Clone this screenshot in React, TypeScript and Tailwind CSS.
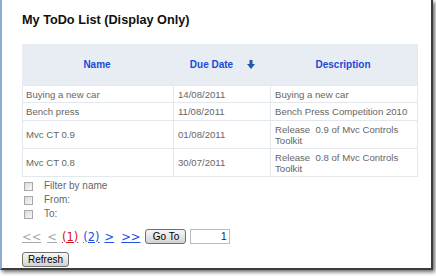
import React from "react";

const rows = [
  { name: "Buying a new car", date: "14/08/2011", desc: ["Buying a new car"], h: "h-[17px]" },
  { name: "Bench press", date: "11/08/2011", desc: ["Bench Press Competition 2010"], h: "h-[18px]" },
  { name: "Mvc CT 0.9", date: "01/08/2011", desc: ["Release\u00a0 0.9 of Mvc Controls", "Toolkit"], h: "h-[28px]" },
  { name: "Mvc CT 0.8", date: "30/07/2011", desc: ["Release\u00a0 0.8 of Mvc Controls", "Toolkit"], h: "h-[28px]" },
];

function Box({ label }: { label: string }) {
  return (
    <div className="flex h-[14px] items-center">
      <span className="ml-[2px] box-border h-[9px] w-[9px] border border-[#a8a8a8] bg-gradient-to-br from-[#dcdcdc] to-[#f8f8f8]" />
      <span className="ml-[11px] text-[10px] leading-[12px] text-[#666]">{label}</span>
    </div>
  );
}

function Btn({ children, w }: { children: React.ReactNode; w: string }) {
  return (
    <div
      className={`box-border flex h-[15px] ${w} items-center justify-center rounded-[3px] border border-[#707070] bg-gradient-to-b from-[#f6f6f6] via-[#e6e6e6] to-[#d2d2d2] text-[10px] leading-[12px] text-black`}
    >
      {children}
    </div>
  );
}

export default function App() {
  return (
    <div className="relative h-[276px] w-[436px] overflow-hidden bg-white font-['Liberation_Sans',Arial,sans-serif]">
      <div className="box-border h-[270px] w-[433px] border-b-2 border-l-2 border-r-2 border-b-[#3c3c3c] border-l-[#8eabd0] border-r-[#3c3c3c] bg-white pl-[20px] shadow-[2px_2px_4px_rgba(0,0,0,0.6)]">
        <div className="pt-[12px] text-[12.7px] font-bold leading-[16px] text-[#111]">My ToDo List (Display Only)</div>

        <div className="mt-[16px] w-[396px] border-b border-r border-[#e3e8ee] text-[9.6px] leading-[11px] text-[#666]">
          <div className="flex h-[41px] items-center bg-[#e8edf3] text-[10px] font-bold text-[#1c4ad8]">
            <div className="w-[150px] text-center">Name</div>
            <div className="flex w-[97px] items-center justify-center pl-[4px]">
              <span>Due Date</span>
              <svg width="8" height="9" viewBox="0 0 8 9" className="ml-[14px]">
                <rect x="2.5" y="0" width="3" height="4.5" fill="#1f5aa6" />
                <path d="M0 4 L8 4 L4 9 Z" fill="#1f5aa6" />
              </svg>
            </div>
            <div className="flex-1 text-center">Description</div>
          </div>
          {rows.map((r, i) => (
            <div key={i} className={`flex ${r.h} border-l border-t border-[#e3e8ee]`}>
              <div className="flex w-[150px] items-center pl-[3px]">{r.name}</div>
              <div className="flex w-[97px] items-center border-l border-[#e3e8ee] pl-[4px]">{r.date}</div>
              <div className="flex flex-1 flex-col justify-center border-l border-[#e3e8ee] pl-[4px]">
                {r.desc.map((d, j) => (
                  <div key={j}>{d}</div>
                ))}
              </div>
            </div>
          ))}
        </div>

        <div className="mt-[2px] flex flex-col">
          <Box label="Filter by name" />
          <Box label="From:" />
          <Box label="To:" />
        </div>

        <div className="mt-[8px] flex h-[15px] items-center font-['DejaVu_Sans',sans-serif] text-[11.5px] leading-[14px]">
          <span className="text-[#a9a9a9] underline">&lt;&lt;</span>
          <span className="ml-[6px] text-[#a9a9a9] underline">&lt;</span>
          <span className="ml-[5px] text-[#e01010] underline">(1)</span>
          <span className="ml-[5px] text-[#2050e0] underline">(2)</span>
          <span className="ml-[5px] text-[#2050e0] underline">&gt;</span>
          <span className="ml-[7px] text-[#2050e0] underline">&gt;&gt;</span>
          <div className="ml-[5px] font-['Liberation_Sans',Arial,sans-serif]">
            <Btn w="w-[41px]">Go To</Btn>
          </div>
          <div className="ml-[4px] box-border flex h-[15px] w-[40px] items-center justify-end border border-[#b8bcc4] pr-[3px] font-['Liberation_Sans',Arial,sans-serif] text-[10px] text-[#0c1c4c]">
            1
          </div>
        </div>

        <div className="mt-[8px]">
          <Btn w="w-[47px]">Refresh</Btn>
        </div>
      </div>
    </div>
  );
}
